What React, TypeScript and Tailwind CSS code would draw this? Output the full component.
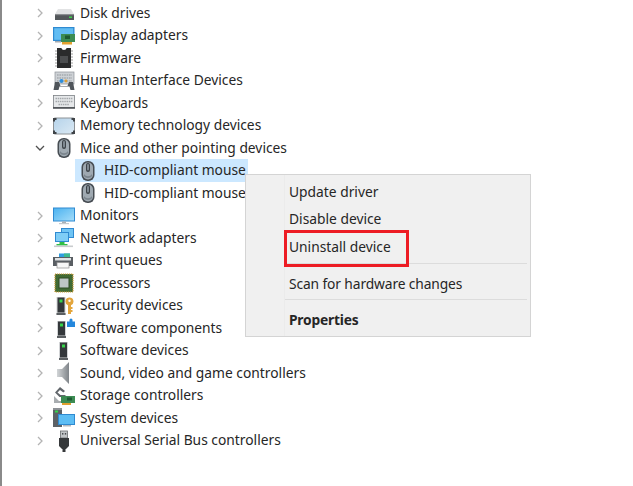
import React from "react";

const Chevron = ({ open }: { open?: boolean }) => (
  <svg width="12" height="12" viewBox="0 0 12 12" fill="none" stroke={open ? "#505050" : "#b4b4b4"} strokeWidth="1.3">
    {open ? <path d="M2 4l4 4 4-4" /> : <path d="M4 2l4 4-4 4" />}
  </svg>
);

const Svg = ({ children }: { children: React.ReactNode }) => (
  <svg width="24" height="24" viewBox="0 0 24 24" className="overflow-visible [filter:blur(0.35px)]">{children}</svg>
);

const Mouse = () => (
  <Svg>
    <rect x="5.5" y="2" width="13" height="20" rx="6" fill="#474d53" />
    <rect x="7" y="3.5" width="10" height="17" rx="4.8" fill="#9fa9b1" />
    <rect x="10" y="4" width="4" height="9" rx="2" fill="#3d4349" />
    <rect x="11" y="5" width="2" height="6.5" rx="1" fill="#7f8991" />
    <path d="M8 15c2 3 6 3 8 0v2c-1 2.5-7 2.5-8 0z" fill="#7b858d" />
  </Svg>
);

const Tower = ({ x, y, h }: { x: number; y: number; h: number }) => (
  <>
    <rect x={x} y={y} width="9" height={h} fill="#d2d4d6" />
    <rect x={x + 1} y={y + 0.5} width="7" height={h - 3} fill="#34383b" />
    <rect x={x + 3} y={y + 2.5} width="3" height="3" fill="#36d44a" />
    <rect x={x} y={y + h - 2} width="9" height="2" fill="#5b5f62" />
  </>
);

const icons: Record<string, React.ReactNode> = {
  disk: (
    <Svg>
      <path d="M6 8h13l3 5H3z" fill="#e2e3e4" />
      <path d="M3 13h19v6H3z" fill="#53575a" />
      <rect x="3" y="13" width="19" height="1.2" fill="#8b8e91" />
      <rect x="17" y="15.5" width="3" height="1.5" fill="#3fd34c" />
    </Svg>
  ),
  display: (
    <Svg>
      <rect x="1" y="3" width="21.5" height="14" fill="#2f8ad1" />
      <rect x="2.2" y="4.2" width="19" height="11.6" fill="#62bdf3" />
      <rect x="9" y="10" width="14" height="8" fill="#3c8c53" />
      <rect x="13" y="11.5" width="5" height="3.5" fill="#1e5a33" />
      <rect x="10" y="18" width="10" height="2.5" fill="#e3a12f" />
      <rect x="3" y="17" width="6" height="1.5" fill="#a4aab0" />
    </Svg>
  ),
  firmware: (
    <Svg>
      <path d="M5 2h4.5c0 2.5 5 2.5 5 0H19v20H5z" fill="#2a2b2c" />
      <path d="M3 5h2M3 8h2M3 11h2M3 14h2M3 17h2M3 20h2M19 5h2M19 8h2M19 11h2M19 14h2M19 17h2M19 20h2" stroke="#a0a0a0" strokeWidth="1.1" />
      <rect x="8" y="10" width="8" height="7" fill="#4c4e50" />
    </Svg>
  ),
  hid: (
    <Svg>
      <rect x="3" y="3" width="19" height="12" fill="#ced2d6" stroke="#8e9398" strokeWidth=".7" />
      <path d="M5 6h15M5 9h15M5 12h15" stroke="#8f959a" strokeWidth="1.2" strokeDasharray="1.6 .8" />
      <path d="M1.5 21l1.5-8h4l1.5 4h7l1.5-4h4l1.5 8h-4l-1-3.5H7.5L6.5 21z" fill="#4f555b" />
      <circle cx="9.5" cy="12" r="2" fill="#2f8fdc" />
      <circle cx="14" cy="12" r="1.4" fill="#e0a030" />
    </Svg>
  ),
  keyboard: (
    <Svg>
      <rect x="1.5" y="4.5" width="21" height="12" fill="#e6e8ea" stroke="#7d8185" strokeWidth=".8" />
      <path d="M3.5 7.5h17M3.5 10.5h17M6.5 13.5h11" stroke="#a4a8ac" strokeWidth="1.5" strokeDasharray="1.5 .7" />
      <rect x="1" y="16" width="22" height="1.8" fill="#54585c" />
    </Svg>
  ),
  memory: (
    <Svg>
      <defs>
        <linearGradient id="memg" x1="0" y1="0" x2="1" y2="1">
          <stop offset="0" stopColor="#b5d3ea" />
          <stop offset="1" stopColor="#dbe9f4" />
        </linearGradient>
      </defs>
      <rect x="1.5" y="4" width="21" height="16" rx="1.5" fill="url(#memg)" stroke="#8d9296" strokeWidth="1" />
      <path d="M1 4h3.5v2H3v1.5H1zM23 4h-3.5v2H21v1.5h2zM1 20h3.5v-2H3v-1.5H1zM23 20h-3.5v-2H21v-1.5h2z" fill="#3f4347" />
    </Svg>
  ),
  monitor: (
    <Svg>
      <defs>
        <linearGradient id="mong" x1="0" y1="0" x2="1" y2="1">
          <stop offset="0" stopColor="#4db3f0" />
          <stop offset="1" stopColor="#a3dcf9" />
        </linearGradient>
      </defs>
      <rect x="1" y="3.5" width="22" height="14" fill="#2f8ad1" />
      <rect x="2" y="4.5" width="20" height="12" fill="url(#mong)" />
      <rect x="10" y="17.5" width="4" height="1.5" fill="#a8b0b6" />
      <rect x="7" y="19" width="10" height="1.2" fill="#c4c9cd" />
    </Svg>
  ),
  network: (
    <Svg>
      <rect x="9" y="2" width="13" height="10" fill="#2f8ad1" />
      <rect x="10" y="3" width="11" height="8" fill="#6fc4f4" />
      <rect x="3" y="6" width="14" height="10" fill="#2f8ad1" />
      <rect x="4" y="7" width="12" height="8" fill="#7fcdf6" />
      <rect x="7.5" y="16" width="5" height="3" fill="#2fbf45" />
      <rect x="4.5" y="18" width="11" height="1.5" fill="#2fbf45" />
      <rect x="2" y="19.5" width="19" height="1.6" fill="#c9ccce" />
    </Svg>
  ),
  print: (
    <Svg>
      <rect x="7" y="4.5" width="11" height="4" fill="#2f9de0" />
      <rect x="12" y="4.5" width="6" height="4" fill="#3fb98e" />
      <rect x="1" y="8" width="20" height="9" fill="#595e63" />
      <rect x="3" y="9" width="16" height="2.5" fill="#dfe2e4" />
      <rect x="5" y="13.5" width="12" height="5.5" fill="#f7f7f7" stroke="#8e8e8e" strokeWidth=".7" />
    </Svg>
  ),
  cpu: (
    <Svg>
      <rect x="3" y="3" width="18" height="18" fill="#406a34" stroke="#c79b3d" strokeWidth="1.2" strokeDasharray="1.2 .8" />
      <rect x="7" y="7" width="10" height="10" fill="#bcc5c4" stroke="#2d4a22" />
    </Svg>
  ),
  security: (
    <Svg>
      <Tower x={4.5} y={3} h={18} />
      <path fillRule="evenodd" d="M17.5 3.5a4 4 0 0 1 1.5 7.7V13h1.5v2H19v1h1.5v2H19v2h-3v-8.8a4 4 0 0 1 1.5-7.7zm0 2a1.2 1.2 0 1 0 0 2.4 1.2 1.2 0 0 0 0-2.4z" fill="#e3a53c" />
    </Svg>
  ),
  softcomp: (
    <Svg>
      <Tower x={5} y={5} h={17} />
      <path d="M15 5.5h2.5V4a1.5 1.5 0 0 1 3 0v1.5H23V11h-8z" fill="#2487dc" />
    </Svg>
  ),
  softdev: (
    <Svg>
      <Tower x={7} y={3} h={18} />
    </Svg>
  ),
  sound: (
    <Svg>
      <defs>
        <linearGradient id="sndg" x1="0" y1="0" x2="1" y2="0">
          <stop offset="0" stopColor="#d2d5d7" />
          <stop offset="1" stopColor="#80858a" />
        </linearGradient>
      </defs>
      <path d="M5 8h5l7-7v22l-7-7H5z" fill="url(#sndg)" />
    </Svg>
  ),
  storage: (
    <Svg>
      <path d="M8 3l5 4-1.6 1.6L8 6 5.5 8.5l3 2.5H13l2 2H7.5L3 8.5z" fill="#62676c" />
      <path d="M2 12l5 5 7 0v2H2z" fill="#a9adb0" />
      <rect x="9" y="12" width="14" height="7" fill="#3c8c53" />
      <rect x="15" y="13.5" width="5" height="3" fill="#1e5a33" />
      <rect x="10" y="19" width="9" height="2" fill="#e0a030" />
    </Svg>
  ),
  system: (
    <Svg>
      <rect x="1" y="2" width="9" height="19" fill="#5c6166" />
      <rect x="1" y="2" width="9" height="2" fill="#8d9195" />
      <rect x="3" y="4.5" width="3" height="2" fill="#36d44a" />
      <rect x="6" y="8" width="17" height="11" fill="#2f8ad1" />
      <rect x="7" y="9" width="15" height="9" fill="#5cbdf4" />
      <rect x="11" y="19" width="8" height="1.5" fill="#b4b9bd" />
    </Svg>
  ),
  usb: (
    <Svg>
      <rect x="8.5" y="2" width="7" height="7" fill="#c2c5c7" stroke="#6b6e71" strokeWidth=".8" />
      <rect x="10" y="4" width="1.4" height="1.6" fill="#4a4d50" />
      <rect x="12.8" y="4" width="1.4" height="1.6" fill="#4a4d50" />
      <path d="M7 9h10v8l-3 3h-4l-3-3z" fill="#36393b" />
      <rect x="10.5" y="20" width="3" height="3" fill="#36393b" />
    </Svg>
  ),
  mouse: <Mouse />,
};

const rows: [string, string, boolean?][] = [
  ["Disk drives", "disk"],
  ["Display adapters", "display"],
  ["Firmware", "firmware"],
  ["Human Interface Devices", "hid"],
  ["Keyboards", "keyboard"],
  ["Memory technology devices", "memory"],
  ["Mice and other pointing devices", "mouse", true],
];
const rows2: [string, string][] = [
  ["Monitors", "monitor"],
  ["Network adapters", "network"],
  ["Print queues", "print"],
  ["Processors", "cpu"],
  ["Security devices", "security"],
  ["Software components", "softcomp"],
  ["Software devices", "softdev"],
  ["Sound, video and game controllers", "sound"],
  ["Storage controllers", "storage"],
  ["System devices", "system"],
  ["Universal Serial Bus controllers", "usb"],
];

const Row = ({ label, icon, open }: { label: string; icon: string; open?: boolean }) => (
  <div className="flex h-[22.5px] items-center">
    <div className="ml-[34px] flex w-[12px] items-center justify-center"><Chevron open={open} /></div>
    <div className="ml-[6px] flex h-[24px] w-[24px] items-center justify-center">{icons[icon]}</div>
    <span className="ml-[4px] whitespace-nowrap">{label}</span>
  </div>
);

const Child = ({ selected }: { selected?: boolean }) => (
  <div className="flex h-[22.5px] items-center pl-[75px]">
    <div className={`flex h-full w-[173px] items-center pl-[1px] ${selected ? "bg-[#cce8ff]" : ""}`}>
      <div className="flex h-[24px] w-[24px] items-center justify-center"><Mouse /></div>
      <span className="ml-[4px] whitespace-nowrap">HID-compliant mouse</span>
    </div>
  </div>
);

const Item = ({ children, bold, tight }: { children: React.ReactNode; bold?: boolean; tight?: boolean }) => (
  <div className={`flex h-[27.5px] items-center pl-[43px] ${bold ? "font-bold tracking-[-0.2px]" : ""} ${tight ? "tracking-[-0.12px]" : ""}`}>{children}</div>
);

export default function App() {
  return (
    <div className="relative h-[486px] w-[633px] overflow-hidden border-l-[2px] border-[#8a8a8a] bg-white text-[13.8px] text-[#262626] [font-family:'Noto_Sans',sans-serif]">
      <div className="-ml-[2px] pt-[1.75px]">
        {rows.map((r) => <Row key={r[0]} label={r[0]} icon={r[1]} open={r[2]} />)}
        <Child selected />
        <Child />
        {rows2.map((r) => <Row key={r[0]} label={r[0]} icon={r[1]} />)}
      </div>
      <div className="absolute left-[243px] top-[174px] h-[163px] w-[286px] border border-[#d4d4d4] bg-[#f0f0f0] pt-[3.25px]">
        <div className="absolute bottom-0 left-[38px] top-0 w-px bg-[#ebebeb]" />
        <Item>Update driver</Item>
        <Item>Disable device</Item>
        <Item>Uninstall device</Item>
        <div className="ml-[38px] mr-[3px] mt-[2px] mb-[6.5px] h-px bg-[#dcdcdc]" />
        <Item tight>Scan for hardware changes</Item>
        <div className="ml-[38px] mr-[3px] mt-[1.5px] mb-[6px] h-px bg-[#dcdcdc]" />
        <Item bold>Properties</Item>
        <div className="absolute left-[38px] top-[55px] h-[37px] w-[125px] border-[3px] border-[#ed1c24]" />
      </div>
    </div>
  );
}
